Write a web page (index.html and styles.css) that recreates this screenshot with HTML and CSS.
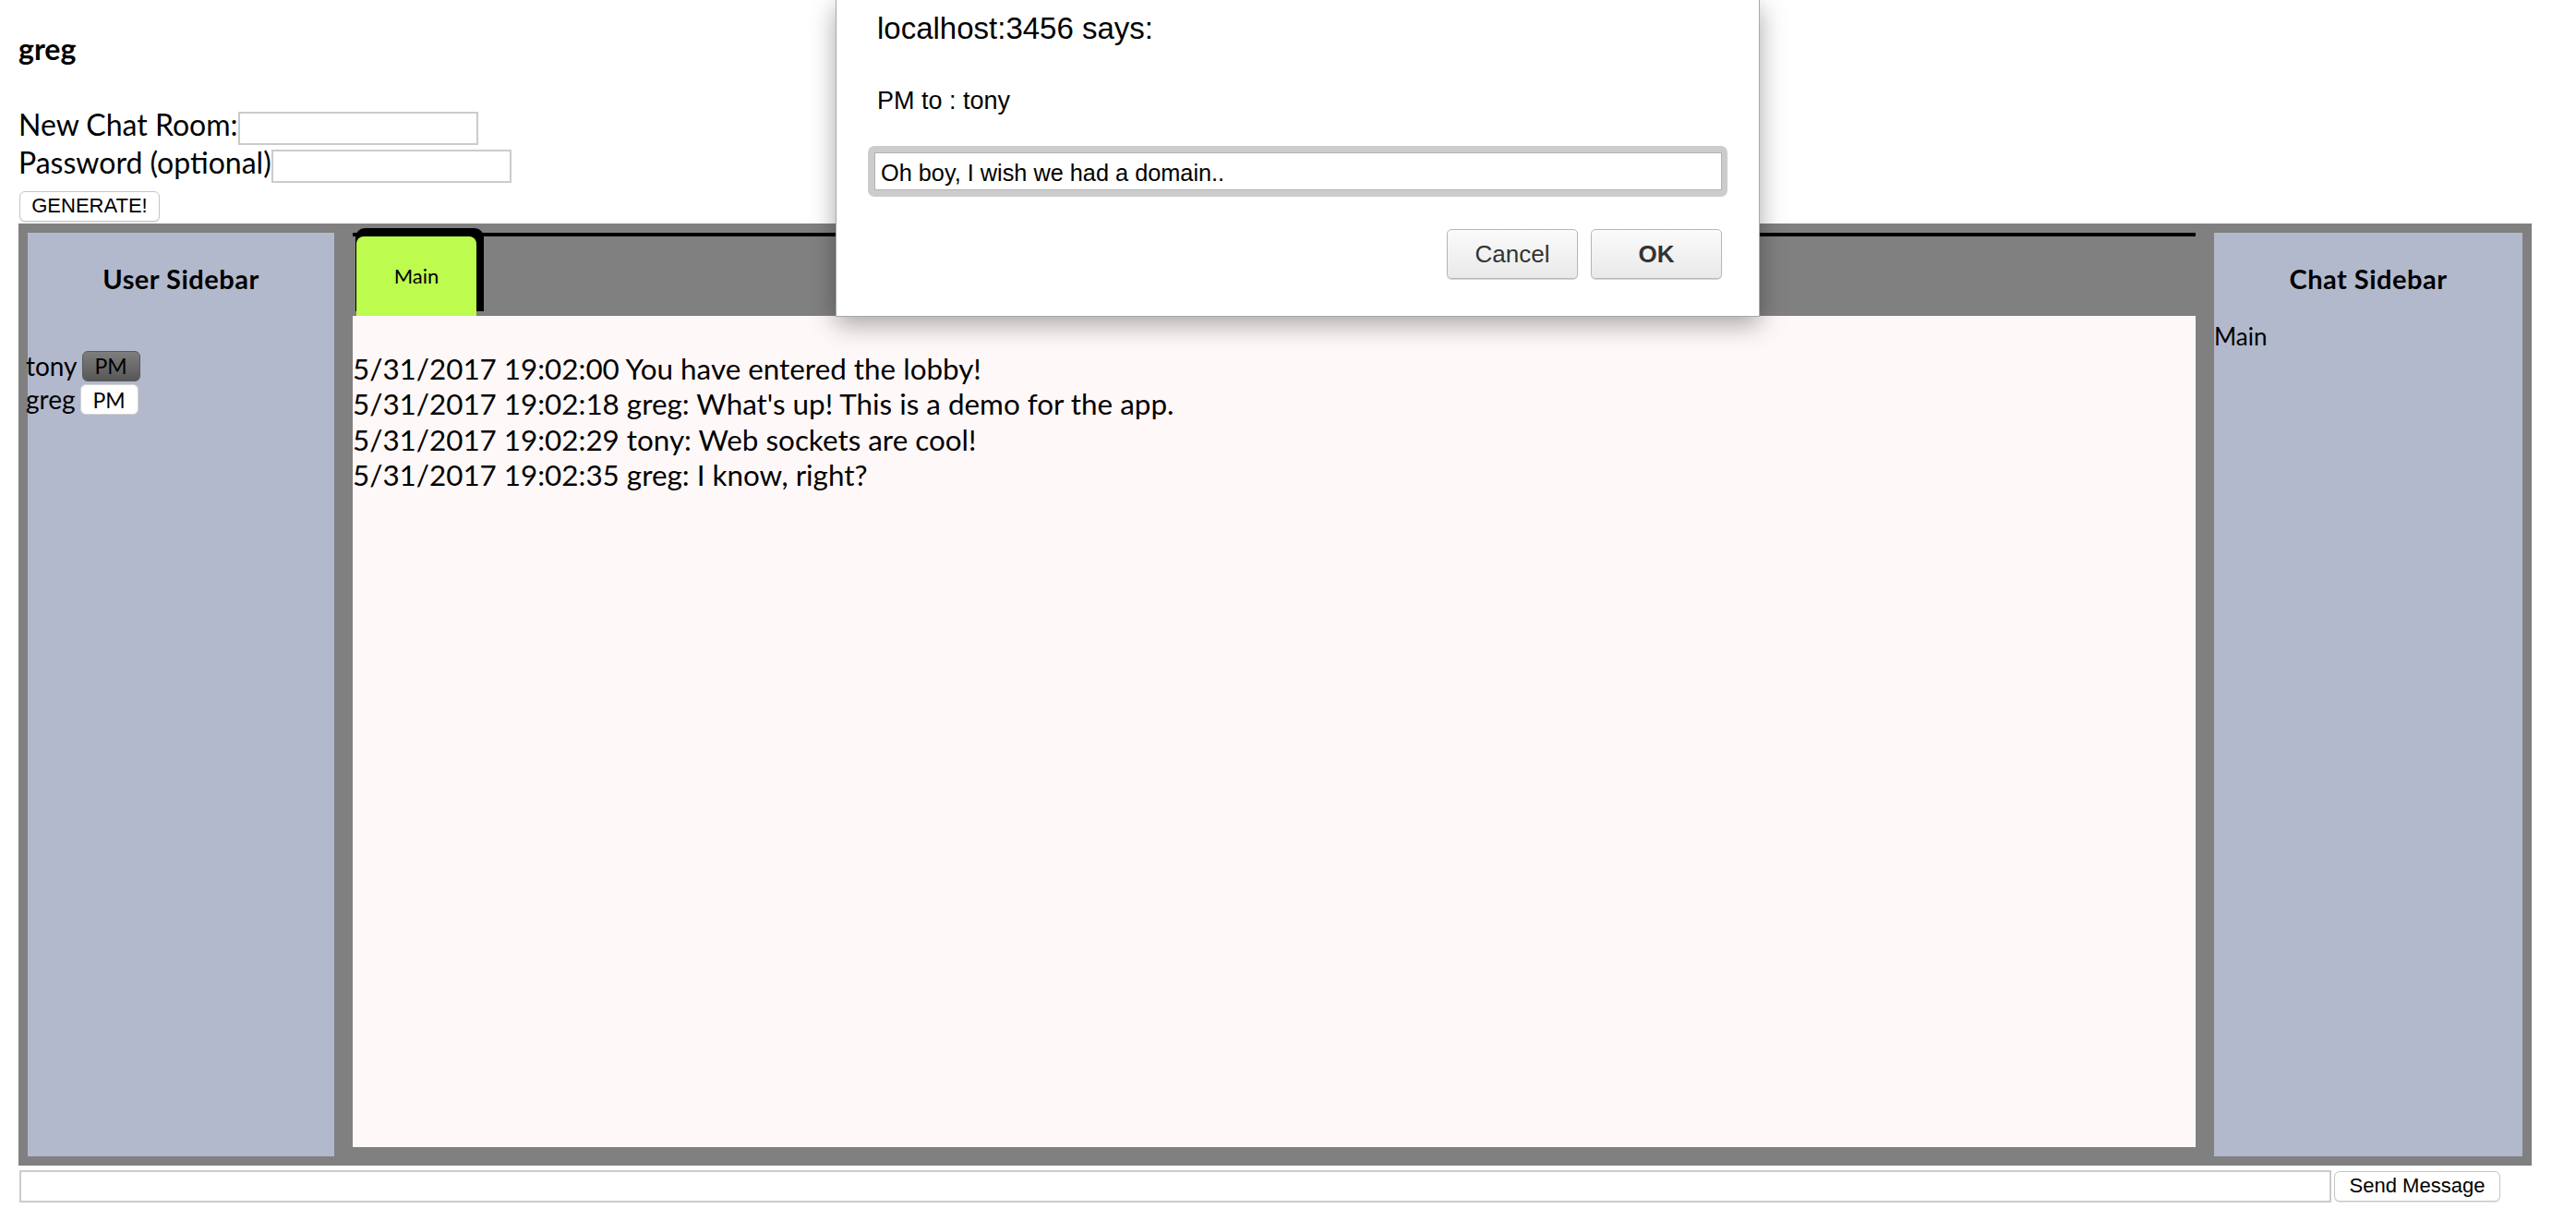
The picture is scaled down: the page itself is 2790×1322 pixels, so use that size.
FILE: index.html
```html
<!DOCTYPE html>
<html>
<head>
<meta charset="utf-8">
<title>Chat</title>
<link rel="stylesheet" href="styles.css">
</head>
<body>
<div class="page">
  <div class="username">greg</div>
  <div class="form-row"><label class="form-label">New Chat Room:</label><input class="field field-room" type="text"></div>
  <div class="form-row"><label class="form-label">Password (optional)</label><input class="field field-pass" type="text"></div>
  <button class="sys-btn generate">GENERATE!</button>

  <div class="chat">
    <aside class="sidebar">
      <h3 class="side-title">User Sidebar</h3>
      <ul class="user-list">
        <li class="user-row"><span class="user-name">tony</span><button class="pm pm-active">PM</button></li>
        <li class="user-row"><span class="user-name">greg</span><button class="pm">PM</button></li>
      </ul>
    </aside>

    <section class="center">
      <div class="tabbar">
        <div class="tab"><div class="tab-face">Main</div></div>
      </div>
      <div class="messages">
        <div class="msg">5/31/2017 19:02:00 You have entered the lobby!</div>
        <div class="msg">5/31/2017 19:02:18 greg: What's up! This is a demo for the app.</div>
        <div class="msg">5/31/2017 19:02:29 tony: Web sockets are cool!</div>
        <div class="msg">5/31/2017 19:02:35 greg: I know, right?</div>
      </div>
    </section>

    <aside class="sidebar">
      <h3 class="side-title">Chat Sidebar</h3>
      <div class="room">Main</div>
    </aside>
  </div>

  <div class="send-row">
    <input class="field field-msg" type="text">
    <button class="sys-btn send">Send Message</button>
  </div>
</div>

<div class="dialog">
  <div class="dialog-title">localhost:3456 says:</div>
  <div class="dialog-msg">PM to : tony</div>
  <div class="prompt-ring"><div class="prompt-input">Oh boy, I wish we had a domain..</div></div>
  <div class="dialog-buttons">
    <button class="dlg-btn">Cancel</button>
    <button class="dlg-btn dlg-ok">OK</button>
  </div>
</div>
</body>
</html>
```

FILE: styles.css
```css
html, body {
  margin: 0;
  padding: 0;
  background: #ffffff;
}

body {
  font-family: Lato, "Open Sans", sans-serif;
  font-size: 32px;
  line-height: 1.2;
  color: #000;
  overflow: hidden;
}

.page {
  padding: 34px 48px 0 20px;
}

.username {
  font-weight: 700;
  height: 38.4px;
}

.form-row {
  display: flex;
  align-items: flex-start;
  height: 41.5px;
}

.username + .form-row {
  margin-top: 43.6px;
}

.form-label {
  line-height: 38.4px;
}

.field {
  box-sizing: border-box;
  border: 2px solid #cbcbcb;
  background: #fff;
  margin: 0;
  padding: 0;
  outline: none;
}

.field-room,
.field-pass {
  margin-top: 5px;
  width: 260px;
  height: 36px;
}

.sys-btn {
  display: block;
  box-sizing: border-box;
  background: #fff;
  border: 1px solid #c6c6c6;
  border-radius: 6px;
  box-shadow: 0 1px 1px rgba(0, 0, 0, 0.12);
  font-family: "Liberation Sans", Arial, sans-serif;
  font-size: 22px;
  color: #000;
  padding: 0;
  margin: 0;
}

.generate {
  margin: 8px 0 0 1px;
  width: 152px;
  height: 33px;
}

.chat {
  margin-top: 2px;
  height: 1020px;
  box-sizing: border-box;
  padding: 10px;
  background: #808080;
  display: grid;
  grid-template-columns: 332px 1996px 334px;
  column-gap: 20px;
  align-items: start;
}

.sidebar {
  height: 1000px;
  background: #b3b9cc;
}

.side-title {
  margin: 0;
  padding-top: 33px;
  font-size: 29px;
  line-height: 33.6px;
  font-weight: 700;
  letter-spacing: 0.5px;
  text-align: center;
}

.user-list {
  list-style: none;
  margin: 61.4px 0 0 -2px;
  padding: 0;
  display: flex;
  flex-direction: column;
  gap: 3.5px;
}

.user-row {
  display: flex;
  align-items: center;
  height: 33px;
}

.user-name {
  font-size: 28px;
  line-height: 33.6px;
}

.pm {
  margin: 0 0 0 5px;
  width: 63px;
  height: 33px;
  box-sizing: border-box;
  padding: 0;
  border: 1px solid #d4d4d4;
  border-radius: 6px;
  background: #fff;
  font-family: Lato, sans-serif;
  font-size: 23px;
  color: #000;
}

.pm-active {
  border-color: #5a5a5a;
  background: linear-gradient(#7e7e7e, #575757);
}

.room {
  margin-top: 30px;
  font-size: 26px;
  line-height: 31.2px;
}

.center {
  height: 990px;
  display: flex;
  flex-direction: column;
}

.tabbar {
  box-sizing: border-box;
  height: 90px;
  border-top: 4px solid #000;
  display: flex;
  align-items: flex-start;
  padding-left: 3px;
}

.tab {
  box-sizing: border-box;
  margin-top: -9px;
  width: 139px;
  height: 90px;
  padding: 9px 8px 0 1px;
  background: #000;
  border-radius: 10px 10px 0 0;
}

.tab-face {
  height: 86px;
  background: #bdfb4f;
  border-radius: 8px 8px 0 0;
  display: flex;
  align-items: center;
  justify-content: center;
  font-size: 22px;
  line-height: 26.4px;
  position: relative;
}

.messages {
  flex: 1;
  background: #fff8f8;
  padding-top: 38px;
  font-size: 31.4px;
  line-height: 38.4px;
}

.send-row {
  display: flex;
  align-items: flex-start;
  margin-top: 5px;
}

.field-msg {
  margin-left: 1px;
  width: 2504px;
  height: 35px;
}

.send {
  margin: 1px 0 0 3px;
  width: 180px;
  height: 33px;
}

/* Browser prompt dialog overlay */
.dialog {
  position: absolute;
  left: 905px;
  top: 0;
  width: 1001px;
  box-sizing: border-box;
  background: #fff;
  border: 1px solid #a9a9a9;
  border-top: none;
  padding: 12px 34px 40px;
  box-shadow: 0 8px 26px rgba(0, 0, 0, 0.35);
  font-family: "Liberation Sans", Arial, sans-serif;
  color: #000;
}

.dialog-title {
  margin-left: 10px;
  font-size: 33px;
  line-height: 38px;
}

.dialog-msg {
  margin: 44px 0 0 10px;
  font-size: 27px;
  line-height: 30px;
}

.prompt-ring {
  margin-top: 34px;
  background: #cccccc;
  border-radius: 7px;
  padding: 7px 6px 7px 7px;
}

.prompt-input {
  box-sizing: border-box;
  height: 41px;
  background: #fff;
  border: 1px solid #b3b3b3;
  padding: 3px 6px 0;
  font-size: 25.3px;
  line-height: 36px;
  white-space: nowrap;
}

.dialog-buttons {
  display: flex;
  justify-content: flex-end;
  gap: 14px;
  margin-top: 35px;
  padding-right: 6px;
}

.dlg-btn {
  box-sizing: border-box;
  width: 142px;
  height: 54px;
  margin: 0;
  padding: 0;
  border: 1px solid #b7b7b7;
  border-radius: 5px;
  background: linear-gradient(#fbfbfb, #e9e9e9);
  box-shadow: 0 1px 1px rgba(0, 0, 0, 0.18);
  font-family: "Liberation Sans", Arial, sans-serif;
  font-size: 26px;
  color: #333;
}

.dlg-ok {
  font-weight: 700;
}
```
